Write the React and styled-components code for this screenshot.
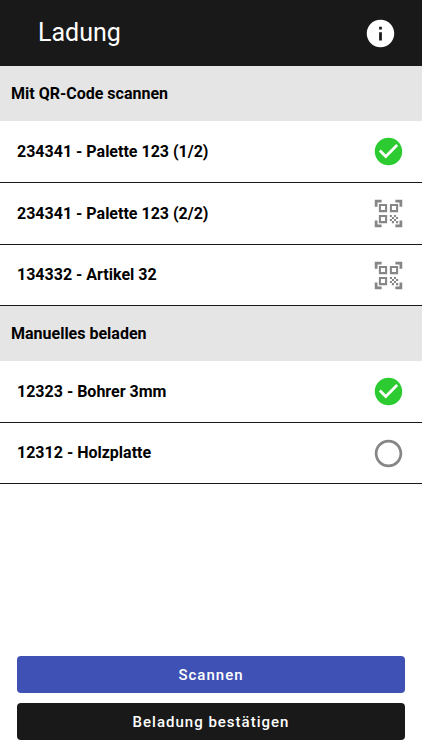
import React, { useState } from 'react';
import styled, { createGlobalStyle } from 'styled-components';
import {
  MdInfo,
  MdCheckCircle,
  MdQrCodeScanner,
  MdRadioButtonUnchecked
} from 'react-icons/md';

const COLORS = {
  DARK: '#191919',
  BLUE: '#3f51b5',
  GREEN: '#2dcb32',
  GRAY: '#868686',
  SECTION: '#e5e5e5'
};

const SCAN_ITEMS = [
  { id: 1, name: '234341 - Palette 123 (1/2)', loaded: true },
  { id: 2, name: '234341 - Palette 123 (2/2)', loaded: false },
  { id: 3, name: '134332 - Artikel 32', loaded: false }
];

const MANUAL_ITEMS = [
  { id: 4, name: '12323 - Bohrer 3mm', loaded: true },
  { id: 5, name: '12312 - Holzplatte', loaded: false }
];

function ScanRow({ item }) {
  return (
    <Row>
      <span>{item.name}</span>
      <Status $loaded={item.loaded}>
        {item.loaded ? <MdCheckCircle /> : <MdQrCodeScanner />}
      </Status>
    </Row>
  );
}

function ManualRow({ item, onToggle }) {
  const inputId = `item-${item.id}`;

  return (
    <Row>
      <label htmlFor={inputId}>{item.name}</label>
      <Status $loaded={item.loaded}>
        <HiddenCheckbox
          id={inputId}
          type="checkbox"
          checked={item.loaded}
          onChange={() => onToggle(item.id)}
        />
        {item.loaded ? <MdCheckCircle /> : <MdRadioButtonUnchecked />}
      </Status>
    </Row>
  );
}

function App() {
  const [manualItems, setManualItems] = useState(MANUAL_ITEMS);

  function toggleItem(id) {
    setManualItems(manualItems.map(item => (
      item.id === id ? { ...item, loaded: !item.loaded } : item
    )));
  }

  return (
    <Page>
      <GlobalStyle />

      <Header>
        <Title>Ladung</Title>
        <InfoButton type="button" aria-label="Info">
          <MdInfo />
        </InfoButton>
      </Header>

      <main>
        <SectionTitle>Mit QR-Code scannen</SectionTitle>
        <List>
          {SCAN_ITEMS.map(item => <ScanRow key={item.id} item={item} />)}
        </List>

        <SectionTitle>Manuelles beladen</SectionTitle>
        <List>
          {manualItems.map(item => (
            <ManualRow key={item.id} item={item} onToggle={toggleItem} />
          ))}
        </List>
      </main>

      <Footer>
        <Button type="button" $color={COLORS.BLUE}>Scannen</Button>
        <Button type="button" $color={COLORS.DARK}>Beladung bestätigen</Button>
      </Footer>
    </Page>
  );
}

const GlobalStyle = createGlobalStyle`
  * {
    box-sizing: border-box;
  }

  body {
    margin: 0;
    background-color: white;
    color: black;
    font-family: Roboto, sans-serif;
  }
`

const Page = styled.div`
  display: flex;
  flex-direction: column;
  min-height: 100vh;
`

const Header = styled.header`
  display: flex;
  align-items: center;
  justify-content: space-between;
  min-height: 66px;
  padding: 0 25px 0 38px;
  background-color: ${COLORS.DARK};
  color: white;
`

const Title = styled.h1`
  margin: 0;
  font-size: 25px;
  font-weight: 400;
  line-height: 32px;
`

const InfoButton = styled.button`
  display: flex;
  padding: 0;
  border: none;
  background: none;
  color: white;
  font-size: 33px;
  cursor: pointer;
`

const SectionTitle = styled.h2`
  display: flex;
  align-items: center;
  min-height: 55px;
  margin: 0;
  padding: 0 11px;
  background-color: ${COLORS.SECTION};
  font-size: 16px;
  font-weight: 700;
  line-height: 24px;
`

const List = styled.ul`
  margin: 0;
  padding: 0;
  list-style: none;
`

const Row = styled.li`
  display: flex;
  align-items: center;
  justify-content: space-between;
  min-height: 62px;
  padding: 0 17px;
  border-bottom: 1px solid ${COLORS.DARK};
  font-size: 16px;
  font-weight: 700;
  line-height: 24px;

  &:last-child {
    min-height: 61px;
  }
`

const Status = styled.span`
  display: flex;
  position: relative;
  color: ${({ $loaded }) => ($loaded ? COLORS.GREEN : COLORS.GRAY)};
  font-size: 33px;
`

// lies over the icon so that the icon itself can be tapped
const HiddenCheckbox = styled.input`
  position: absolute;
  inset: 0;
  width: 100%;
  height: 100%;
  margin: 0;
  opacity: 0;
  cursor: pointer;
`

const Footer = styled.footer`
  display: flex;
  flex-direction: column;
  gap: 10px;
  margin-top: auto;
  padding: 10px 17px;
`

const Button = styled.button`
  min-height: 37px;
  padding: 0 16px;
  border: none;
  border-radius: 4px;
  background-color: ${({ $color }) => $color};
  color: white;
  font-family: inherit;
  font-size: 15px;
  font-weight: 500;
  letter-spacing: 1px;
  cursor: pointer;
`

export default App;
